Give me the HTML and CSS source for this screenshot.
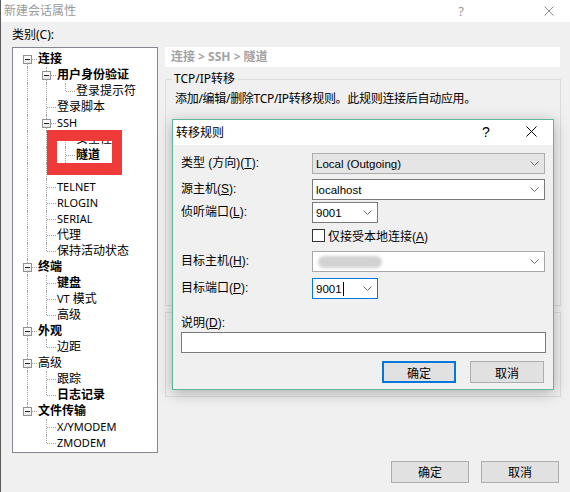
FILE: index.html
```html
<!DOCTYPE html>
<html lang="zh">
<head>
<meta charset="utf-8">
<title>新建会话属性</title>
<link rel="stylesheet" href="styles.css">
</head>
<body>
<div class="win">
  <div class="titlebar">
    <span class="title">新建会话属性</span>
    <span class="spacer"></span>
    <span class="help">?</span>
    <span class="close"><svg width="10" height="10" viewBox="0 0 10 10"><path d="M0.5 0.5 L9.5 9.5 M9.5 0.5 L0.5 9.5" stroke="#8a8a8a" stroke-width="1" fill="none"/></svg></span>
  </div>

  <div class="main">
    <div class="left">
      <div class="cat-label">类别(C):</div>
      <div class="tree">
        <div class="row"><span class="nd first"><i class="exp"></i></span><span class="txt b">连接</span></div>
        <div class="row"><span class="ind v"></span><span class="nd mid"><i class="exp"></i></span><span class="txt b">用户身份验证</span></div>
        <div class="row"><span class="ind v"></span><span class="ind v"></span><span class="nd last"></span><span class="txt">登录提示符</span></div>
        <div class="row"><span class="ind v"></span><span class="nd mid"></span><span class="txt">登录脚本</span></div>
        <div class="row"><span class="ind v"></span><span class="nd mid"><i class="exp"></i></span><span class="txt lat">SSH</span></div>
        <div class="row"><span class="ind v"></span><span class="ind v"></span><span class="nd mid"></span><span class="txt">安全性</span></div>
        <div class="row"><span class="ind v"></span><span class="ind v"></span><span class="nd mid"></span><span class="txt b">隧道</span></div>
        <div class="row"><span class="ind v"></span><span class="ind v"></span><span class="nd last"></span><span class="txt lat">SFTP</span></div>
        <div class="row"><span class="ind v"></span><span class="nd mid"></span><span class="txt lat">TELNET</span></div>
        <div class="row"><span class="ind v"></span><span class="nd mid"></span><span class="txt lat">RLOGIN</span></div>
        <div class="row"><span class="ind v"></span><span class="nd mid"></span><span class="txt lat">SERIAL</span></div>
        <div class="row"><span class="ind v"></span><span class="nd mid"></span><span class="txt">代理</span></div>
        <div class="row"><span class="ind v"></span><span class="nd last"></span><span class="txt">保持活动状态</span></div>
        <div class="row"><span class="nd mid"><i class="exp"></i></span><span class="txt b">终端</span></div>
        <div class="row"><span class="ind v"></span><span class="nd mid"></span><span class="txt b">键盘</span></div>
        <div class="row"><span class="ind v"></span><span class="nd mid"></span><span class="txt"><span class="lat">VT</span> 模式</span></div>
        <div class="row"><span class="ind v"></span><span class="nd last"></span><span class="txt">高级</span></div>
        <div class="row"><span class="nd mid"><i class="exp"></i></span><span class="txt b">外观</span></div>
        <div class="row"><span class="ind v"></span><span class="nd last"></span><span class="txt">边距</span></div>
        <div class="row"><span class="nd mid"><i class="exp"></i></span><span class="txt">高级</span></div>
        <div class="row"><span class="ind v"></span><span class="nd mid"></span><span class="txt">跟踪</span></div>
        <div class="row"><span class="ind v"></span><span class="nd last"></span><span class="txt b">日志记录</span></div>
        <div class="row"><span class="nd last"><i class="exp"></i></span><span class="txt b">文件传输</span></div>
        <div class="row"><span class="ind"></span><span class="nd mid"></span><span class="txt lat">X/YMODEM</span></div>
        <div class="row"><span class="ind"></span><span class="nd last"></span><span class="txt lat">ZMODEM</span></div>
      </div>
    </div>

    <div class="right">
      <div class="crumb">连接 &gt; SSH &gt; 隧道</div>
      <fieldset class="group g1">
        <legend>TCP/IP转移</legend>
        <p class="desc">添加/编辑/删除TCP/IP转移规则。此规则连接后自动应用。</p>
      </fieldset>
      <fieldset class="group g2"></fieldset>
    </div>
  </div>

  <div class="footer">
    <div class="btn main-btn">确定</div>
    <div class="btn main-btn">取消</div>
  </div>

  <div class="redbox"></div>

  <div class="dlg">
    <div class="dlg-title">
      <span class="dlg-name">转移规则</span>
      <span class="spacer"></span>
      <span class="dlg-q">?</span>
      <span class="dlg-x"><svg width="11" height="11" viewBox="0 0 11 11"><path d="M0.5 0.5 L10.5 10.5 M10.5 0.5 L0.5 10.5" stroke="#000" stroke-width="1" fill="none"/></svg></span>
    </div>
    <div class="dlg-body">
      <div class="form">
        <label class="lbl">类型 (方向)(<u>T</u>):</label>
        <div class="sel dis"><span class="val">Local (Outgoing)</span><svg class="chev" width="9" height="5" viewBox="0 0 9 5"><polyline points="0.5,0.5 4.5,4.5 8.5,0.5" fill="none" stroke="#6a6a6a"/></svg></div>

        <label class="lbl">源主机(<u>S</u>):</label>
        <div class="sel"><span class="val">localhost</span><svg class="chev" width="9" height="5" viewBox="0 0 9 5"><polyline points="0.5,0.5 4.5,4.5 8.5,0.5" fill="none" stroke="#6a6a6a"/></svg></div>

        <label class="lbl">侦听端口(<u>L</u>):</label>
        <div class="sel narrow"><span class="val">9001</span><svg class="chev" width="9" height="5" viewBox="0 0 9 5"><polyline points="0.5,0.5 4.5,4.5 8.5,0.5" fill="none" stroke="#6a6a6a"/></svg></div>

        <span></span>
        <div class="check"><span class="box"></span><span>仅接受本地连接(<u>A</u>)</span></div>

        <label class="lbl">目标主机(<u>H</u>):</label>
        <div class="sel light"><span class="blur"></span><svg class="chev" width="9" height="5" viewBox="0 0 9 5"><polyline points="0.5,0.5 4.5,4.5 8.5,0.5" fill="none" stroke="#6a6a6a"/></svg></div>

        <label class="lbl">目标端口(<u>P</u>):</label>
        <div class="sel narrow focus"><span class="val">9001</span><span class="caret"></span><svg class="chev" width="9" height="5" viewBox="0 0 9 5"><polyline points="0.5,0.5 4.5,4.5 8.5,0.5" fill="none" stroke="#6a6a6a"/></svg></div>
      </div>
      <div class="note-lbl">说明(<u>D</u>):</div>
      <div class="input"></div>
      <div class="dlg-btns">
        <div class="btn def">确定</div>
        <div class="btn">取消</div>
      </div>
    </div>
  </div>
</div>
</body>
</html>
```

FILE: styles.css
```css
* { box-sizing: border-box; }

body {
  margin: 0;
  background: #f0f0f0;
  font-family: "Noto Sans", "Noto Sans CJK SC", sans-serif;
  font-size: 12px;
  color: #000;
}

.win {
  position: relative;
  width: 570px;
  height: 492px;
  border-left: 1px solid #5a5a5a;
  overflow: hidden;
  background: #f0f0f0;
}

/* title bar */
.titlebar {
  height: 22px;
  background: #fff;
  display: flex;
  align-items: center;
  color: #9a9a9a;
}
.title { padding-left: 3px; font-size: 12px; line-height: 22px; }
.spacer { flex: 1; }
.help { width: 20px; text-align: center; font-size: 13px; margin-right: 57px; }
.close { width: 42px; display: flex; justify-content: center; }

/* main area */
.main { display: flex; }
.left { padding-left: 11px; }
.cat-label { margin-top: 5px; height: 16px; line-height: 16px; }

.tree {
  margin-top: 4px;
  width: 146px;
  height: 406px;
  background: #fff;
  border: 1px solid #828790;
  padding: 3px 0 0 5px;
  overflow: hidden;
}
.row { display: flex; height: 16px; align-items: center; }
.ind, .nd { position: relative; width: 19px; height: 16px; flex: none; }
.ind.v::before,
.nd::before {
  content: "";
  position: absolute;
  left: 9px;
  border-left: 1px dotted #a0a0a0;
}
.ind.v::before { top: 0; bottom: 0; }
.nd.mid::before { top: 0; bottom: 0; }
.nd.last::before { top: 0; height: 8px; }
.nd.first::before { top: 8px; bottom: 0; }
.nd::after {
  content: "";
  position: absolute;
  left: 10px;
  top: 8px;
  width: 9px;
  border-top: 1px dotted #a0a0a0;
}
.exp {
  position: absolute;
  left: 5px;
  top: 4px;
  width: 9px;
  height: 9px;
  border: 1px solid #919191;
  background: linear-gradient(#fff, #e8e8e8);
  z-index: 1;
}
.exp::after {
  content: "";
  position: absolute;
  left: 1px;
  top: 3px;
  width: 5px;
  height: 1px;
  background: #222;
}
.txt { margin-left: 1px; line-height: 16px; white-space: nowrap; font-size: 12px; }
.txt.b { font-weight: bold; }
.lat { font-size: 11px; }

/* right panel */
.right { margin-left: 7px; margin-top: 25px; width: 396px; }
.crumb {
  height: 20px;
  width: 395px;
  background: #fff;
  color: #a2a2a2;
  font-weight: bold;
  font-size: 12px;
  line-height: 20px;
  padding-left: 6px;
}
.group {
  margin: 0;
  border: 1px solid #dcdcdc;
  padding: 0 9px;
  min-width: 0;
}
.g1 { margin-top: 4px; height: 235px; }
.g2 { margin-top: 6px; height: 85px; }
.group legend { padding: 0 2px; margin-left: -3px; line-height: 16px; }
.desc { margin: 4px 0 0; line-height: 16px; letter-spacing: -0.3px; white-space: nowrap; }

/* footer buttons */
.footer {
  margin-top: 8px;
  display: flex;
  justify-content: flex-end;
  gap: 12px;
  padding-right: 11px;
}
.btn {
  height: 22px;
  background: #e1e1e1;
  border: 1px solid #adadad;
  display: flex;
  align-items: center;
  justify-content: center;
  font-size: 12px;
}
.main-btn { width: 78px; }

/* red highlight annotation */
.redbox {
  position: absolute;
  left: 46px;
  top: 130px;
  width: 75px;
  height: 45px;
  border-style: solid;
  border-color: #ef3a3a;
  border-width: 11px 10px 12px 10px;
}

/* dialog */
.dlg {
  position: absolute;
  left: 171px;
  top: 119px;
  width: 382px;
  height: 271px;
  border: 1px solid #5fb79a;
  background: #f0f0f0;
  box-shadow: 0 3px 14px rgba(0, 0, 0, 0.28);
  font-family: "Liberation Sans", "Noto Sans CJK SC", sans-serif;
}
.dlg-title {
  height: 25px;
  background: #fff;
  display: flex;
  align-items: center;
  padding-bottom: 2px;
}
.dlg-name { padding-left: 3px; }
.dlg-q { width: 46px; text-align: center; font-size: 14px; }
.dlg-x { width: 44px; display: flex; justify-content: center; }

.dlg-body { padding: 8px 7px 0 8px; }
.form {
  display: grid;
  grid-template-columns: 131px 1fr;
  grid-template-rows: 26px 23px 27px 22px 27px 21px;
  align-items: start;
}
.lbl { line-height: 21px; height: 21px; white-space: nowrap; }
.sel {
  height: 21px;
  border: 1px solid #7a7a7a;
  background: #fff;
  display: flex;
  align-items: center;
  padding-left: 3px;
  margin-right: 1px;
}
.val { font-size: 11.5px; }
.sel.dis { background: #e5e5e5; border-color: #adadad; }
.sel.light { border-color: #a8a8a8; }
.sel.narrow { width: 66px; }
.sel.focus { border-color: #0078d7; }
.chev { margin-left: auto; margin-right: 5px; flex: none; }
.caret { width: 1px; height: 14px; background: #000; margin-left: 1px; }
.blur {
  width: 64px;
  height: 12px;
  border-radius: 6px;
  background: #d2d2d2;
  filter: blur(1.5px);
  margin-left: 2px;
}
.check { display: flex; align-items: center; height: 13px; }
.box {
  width: 13px;
  height: 13px;
  border: 1px solid #333;
  background: #fff;
  margin-right: 3px;
}
.note-lbl { margin-top: 16px; line-height: 17px; height: 17px; }
.input {
  height: 21px;
  border: 1px solid #7a7a7a;
  background: #fff;
}
.dlg-btns {
  margin-top: 8px;
  display: flex;
  justify-content: flex-end;
  gap: 14px;
  margin-right: 2px;
}
.dlg-btns .btn { width: 74px; }
.btn.def { border: 2px solid #0078d7; }
```
